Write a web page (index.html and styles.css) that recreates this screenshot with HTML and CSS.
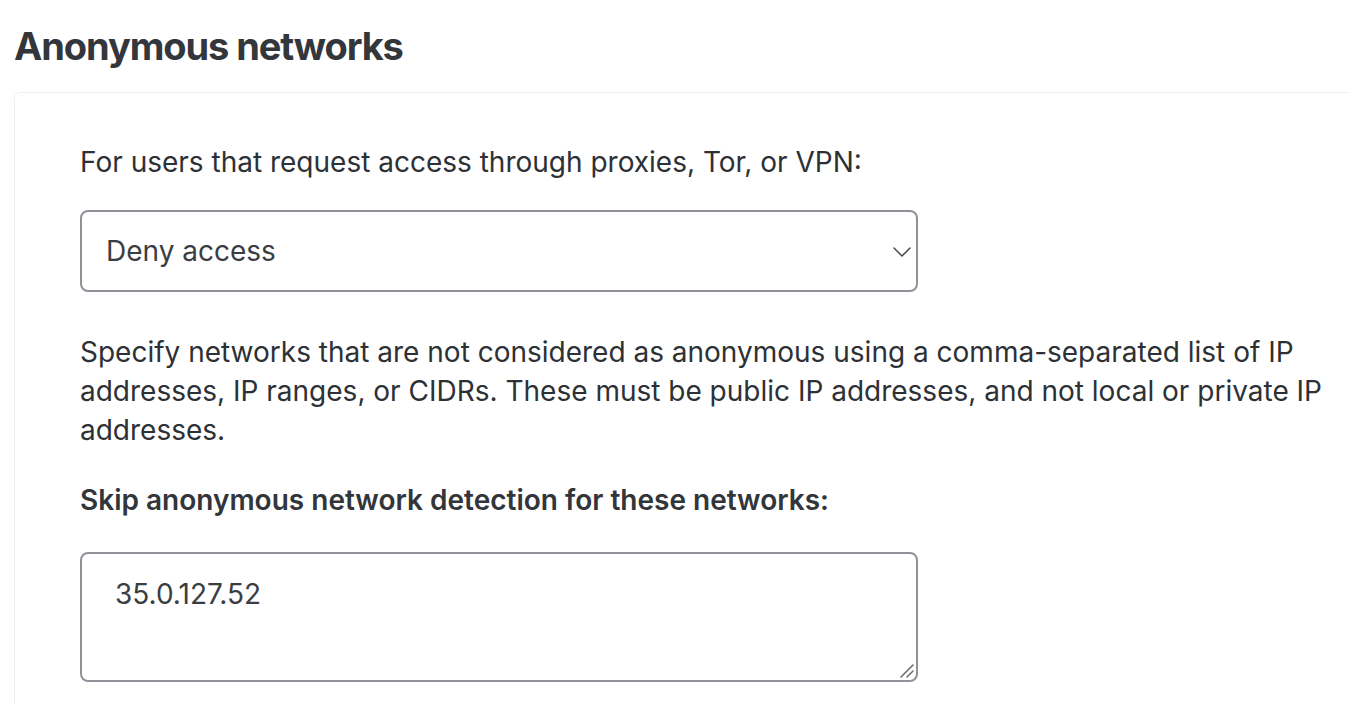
FILE: index.html
```html
<!DOCTYPE html>
<html lang="en">
<head>
<meta charset="utf-8">
<title>Anonymous networks</title>
<link rel="stylesheet" href="styles.css">
</head>
<body>
<main class="page">
  <h1 class="title">Anonymous networks</h1>
  <section class="card">
    <p class="intro">For users that request access through proxies, Tor, or VPN:</p>
    <div class="select-wrap">
      <select class="select">
        <option>Deny access</option>
        <option>Allow access</option>
      </select>
      <svg class="chevron" width="18" height="10" viewBox="0 0 18 10" aria-hidden="true">
        <path d="M1 1 L9 9 L17 1" fill="none" stroke="#4a4e53" stroke-width="1.6" stroke-linecap="round" stroke-linejoin="round"/>
      </svg>
    </div>
    <p class="desc">Specify networks that are not considered as anonymous using a comma-separated list of IP addresses, IP ranges, or CIDRs. These must be public IP addresses, and not local or private IP addresses.</p>
    <label class="label" for="nets">Skip anonymous network detection for these networks:</label>
    <div class="ta-wrap">
      <textarea id="nets" class="textarea">35.0.127.52</textarea>
      <svg class="grip" width="16" height="16" viewBox="0 0 16 16" aria-hidden="true">
        <path d="M2 14 L14 2 M8 14 L14 8" fill="none" stroke="#6d7176" stroke-width="1.6" stroke-linecap="round"/>
      </svg>
    </div>
  </section>
</main>
</body>
</html>
```

FILE: styles.css
```css
html, body {
  margin: 0;
  padding: 0;
  background: #ffffff;
  overflow: hidden;
}

body {
  font-family: "Inter", "Liberation Sans", sans-serif;
  color: #2d3136;
}

.page {
  padding-left: 14px;
  padding-top: 23px;
}

.title {
  margin: 0;
  font-size: 38px;
  line-height: 46px;
  font-weight: 700;
  color: #33373b;
  letter-spacing: -1.1px;
}

.card {
  margin-top: 23px;
  margin-right: -30px;
  border: 1px solid #f0f0f0;
  border-radius: 6px;
  padding: 49px 20px 60px 65px;
  height: 700px;
  box-sizing: border-box;
}

.intro {
  margin: 0;
  font-size: 28px;
  line-height: 40px;
}

.select-wrap {
  position: relative;
  width: 838px;
  margin-top: 28px;
}

.select {
  display: block;
  width: 838px;
  height: 82px;
  box-sizing: border-box;
  appearance: none;
  -webkit-appearance: none;
  background: #ffffff;
  border: 2px solid #8f9399;
  border-radius: 8px;
  padding: 0 60px 0 24px;
  font-family: "Inter", "Liberation Sans", sans-serif;
  font-size: 28px;
  color: #3a3e43;
  outline: none;
}

.chevron {
  position: absolute;
  top: 37px;
  right: 7px;
  width: 18px;
  height: 10px;
}

.desc {
  margin: 41px 0 0 0;
  font-size: 28px;
  line-height: 39px;
  max-width: 1250px;
}

.label {
  display: block;
  margin-top: 30px;
  font-size: 28px;
  line-height: 40px;
  font-weight: 600;
  color: #32363b;
}

.ta-wrap {
  position: relative;
  width: 838px;
  margin-top: 32px;
}

.textarea {
  display: block;
  width: 838px;
  height: 130px;
  box-sizing: border-box;
  border: 2px solid #8f9399;
  border-radius: 8px;
  padding: 20px 33px;
  font-family: "Inter", "Liberation Sans", sans-serif;
  font-size: 28px;
  line-height: 40px;
  color: #3a3e43;
  resize: none;
  outline: none;
}

.grip {
  position: absolute;
  right: 3px;
  bottom: 3px;
  width: 16px;
  height: 16px;
  pointer-events: none;
}
```
